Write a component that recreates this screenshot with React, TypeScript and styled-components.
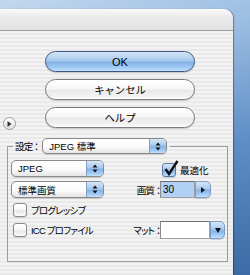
import React from "react";
import styled, { createGlobalStyle } from "styled-components";

const FONT = `"Liberation Sans", "Noto Sans CJK JP", sans-serif`;
const AQUA = "linear-gradient(#d6e6f8 0%, #a9c9ee 45%, #84b3e8 55%, #a6cdf6 85%, #c6e2fc 100%)";
const WHITE = "linear-gradient(#ffffff 0%, #f7f7f7 45%, #e9e9e9 55%, #f2f2f2 85%, #ffffff 100%)";

const GlobalStyle = createGlobalStyle`
  html, body { margin: 0; padding: 0; width: 250px; height: 275px; overflow: hidden; }
  body { font-family: ${FONT}; color: #000; }
`;

const Desktop = styled.div`
  width: 250px;
  height: 275px;
  box-sizing: border-box;
  padding-top: 9px;
  background: linear-gradient(160deg, #c2d8ee 0%, #9cbde2 30%, #5f8fc6 62%, #3c6aa4 100%);
`;

const Window = styled.div`
  width: 233px;
  height: 266px;
  border-top-right-radius: 9px;
  overflow: hidden;
  display: flex;
  flex-direction: column;
  box-shadow: 1px 0 1px rgba(0, 0, 0, 0.35);
`;

const TitleBar = styled.div`
  flex: none;
  height: 21px;
  background: linear-gradient(#fafafa 0%, #ececec 35%, #e3e3e3 100%);
  border-bottom: 1px solid #9a9a9a;
`;

const Body = styled.div`
  flex: 1;
  padding-top: 20px;
  background: repeating-linear-gradient(to bottom, #f3f3f3 0 2px, #e9e9e9 2px 4px);
`;

const ButtonGrid = styled.div`
  display: grid;
  grid-template-columns: 45px 150px;
  grid-auto-rows: 21px;
  row-gap: 7px;
`;

const PushButton = styled.button<{ $primary?: boolean }>`
  grid-column: 2;
  box-sizing: border-box;
  height: 21px;
  margin: 0;
  padding: 0;
  border-radius: 11px;
  border: 1px solid ${(p) => (p.$primary ? "#3d5683" : "#7b7b7b")};
  background: ${(p) => (p.$primary ? AQUA : WHITE)};
  box-shadow: 0 1px 1px rgba(0, 0, 0, 0.18);
  font: ${(p) => (p.$primary ? "11px" : "10.3px")} ${FONT};
  color: #000;
`;

const Disclosure = styled.span`
  grid-column: 1;
  align-self: end;
  justify-self: start;
  margin: 0 0 -2px 3px;
  width: 13px;
  height: 13px;
  box-sizing: border-box;
  border-radius: 50%;
  border: 1px solid #9a9a9a;
  background: linear-gradient(#ffffff, #e2e2e2);
  display: flex;
  align-items: center;
  justify-content: center;
`;

const Group = styled.fieldset`
  margin: 10px 5px 0 7px;
  padding: 6px 3px 22px 3px;
  border: 1px solid #9c9c9c;
  min-width: 0;
`;

const Legend = styled.legend`
  margin-left: 2px;
  padding: 0 3px 0 2px;
  height: 16px;
  display: flex;
  align-items: center;
  gap: 4px;
`;

const Label = styled.span<{ $palt?: boolean }>`
  font-size: 9.5px;
  white-space: nowrap;
  font-feature-settings: ${(p) => (p.$palt ? `"palt" 1` : "normal")};
  letter-spacing: ${(p) => (p.$palt ? "-0.8px" : "0")};
`;

const OptionsGrid = styled.div`
  display: grid;
  grid-template-columns: 119px 30px 1fr;
  grid-template-rows: 17px 17px 15px 18px;
  row-gap: 4px;
  align-items: center;
`;

const Popup = styled.div<{ $w: number; $h: number }>`
  box-sizing: border-box;
  width: ${(p) => p.$w}px;
  height: ${(p) => p.$h}px;
  display: flex;
  border: 1px solid #8a8a8a;
  border-radius: 5px;
  overflow: hidden;
  background: linear-gradient(#ffffff 0%, #fbfbfb 55%, #e4e4e4 100%);
  box-shadow: 0 1px 1px rgba(0, 0, 0, 0.15);
`;

const PopupText = styled.span`
  flex: 1;
  display: flex;
  align-items: center;
  padding-left: 6px;
  font-size: 9.5px;
  white-space: nowrap;
`;

const PopupCap = styled.span`
  width: 16px;
  display: flex;
  align-items: center;
  justify-content: center;
  background: ${AQUA};
  border-left: 1px solid #7f9fca;
`;

const CheckRow = styled.label<{ $bottom?: boolean }>`
  display: flex;
  align-items: center;
  gap: 4px;
  margin-left: 2px;
  align-self: ${(p) => (p.$bottom ? "end" : "center")};
`;

const CheckBox = styled.span<{ $checked?: boolean }>`
  position: relative;
  flex: none;
  box-sizing: border-box;
  width: 14px;
  height: 14px;
  border: 1px solid ${(p) => (p.$checked ? "#5a7aa8" : "#8a8a8a")};
  border-radius: 3px;
  background: ${(p) => (p.$checked ? AQUA : WHITE)};
  box-shadow: 0 1px 1px rgba(0, 0, 0, 0.12);
`;

const CheckMark = styled.svg`
  position: absolute;
  left: 1px;
  top: -4px;
`;

const RightLabel = styled(Label)`
  justify-self: end;
`;

const FieldGroup = styled.div`
  display: flex;
  align-items: stretch;
`;

const TextField = styled.span<{ $w: number; $h: number; $selected?: boolean }>`
  box-sizing: border-box;
  width: ${(p) => p.$w}px;
  height: ${(p) => p.$h}px;
  display: flex;
  align-items: center;
  padding-left: 2px;
  font-size: 10px;
  background: ${(p) => (p.$selected ? "#b2d0f3" : "#ffffff")};
  border: 1px solid #a0a0a0;
  border-top-color: #6e6e6e;
  border-left-color: #8a8a8a;
`;

const ArrowButton = styled.span<{ $w: number }>`
  box-sizing: border-box;
  width: ${(p) => p.$w}px;
  display: flex;
  align-items: center;
  justify-content: center;
  background: ${AQUA};
  border: 1px solid #7d9cc7;
  border-radius: 0 5px 5px 0;
  box-shadow: 0 1px 1px rgba(0, 0, 0, 0.15);
`;

const UpDown = () => (
  <svg width="6" height="9" viewBox="0 0 6 9">
    <path d="M3 0.5 L5.5 3.5 L0.5 3.5 Z" fill="#111" />
    <path d="M3 8.5 L5.5 5.5 L0.5 5.5 Z" fill="#111" />
  </svg>
);

const PopupMenu = ({ w, h, text }: { w: number; h: number; text: string }) => (
  <Popup $w={w} $h={h}>
    <PopupText>{text}</PopupText>
    <PopupCap>
      <UpDown />
    </PopupCap>
  </Popup>
);

export default function App() {
  return (
    <>
      <GlobalStyle />
      <Desktop>
        <Window>
          <TitleBar />
          <Body>
            <ButtonGrid>
              <PushButton $primary>OK</PushButton>
              <PushButton>キャンセル</PushButton>
              <Disclosure>
                <svg width="5" height="6" viewBox="0 0 5 6">
                  <path d="M0.5 0 L4.5 3 L0.5 6 Z" fill="#333" />
                </svg>
              </Disclosure>
              <PushButton>ヘルプ</PushButton>
            </ButtonGrid>
            <Group>
              <Legend>
                <Label $palt>設定 ：</Label>
                <PopupMenu w={125} h={16} text="JPEG 標準" />
              </Legend>
              <OptionsGrid>
                <PopupMenu w={93} h={17} text="JPEG" />
                <span />
                <CheckRow $bottom>
                  <CheckBox $checked>
                    <CheckMark width="15" height="16" viewBox="0 0 15 16">
                      <path d="M1.5 9 L5 14 L13.5 1" stroke="#111" strokeWidth="2.4" fill="none" strokeLinejoin="miter" />
                    </CheckMark>
                  </CheckBox>
                  <Label>最適化</Label>
                </CheckRow>

                <PopupMenu w={93} h={17} text="標準画質" />
                <RightLabel $palt>画質 ：</RightLabel>
                <FieldGroup>
                  <TextField $w={35} $h={17} $selected>30</TextField>
                  <ArrowButton $w={16}>
                    <svg width="4" height="6" viewBox="0 0 4 6">
                      <path d="M0 0 L4 3 L0 6 Z" fill="#111" />
                    </svg>
                  </ArrowButton>
                </FieldGroup>

                <CheckRow>
                  <CheckBox />
                  <Label $palt>プログレッシブ</Label>
                </CheckRow>
                <span />
                <span />

                <CheckRow>
                  <CheckBox />
                  <Label $palt>ICC プロファイル</Label>
                </CheckRow>
                <RightLabel $palt>マット ：</RightLabel>
                <FieldGroup>
                  <TextField $w={50} $h={18} />
                  <ArrowButton $w={15}>
                    <svg width="6" height="5" viewBox="0 0 6 5">
                      <path d="M0 0 L6 0 L3 5 Z" fill="#111" />
                    </svg>
                  </ArrowButton>
                </FieldGroup>
              </OptionsGrid>
            </Group>
          </Body>
        </Window>
      </Desktop>
    </>
  );
}
